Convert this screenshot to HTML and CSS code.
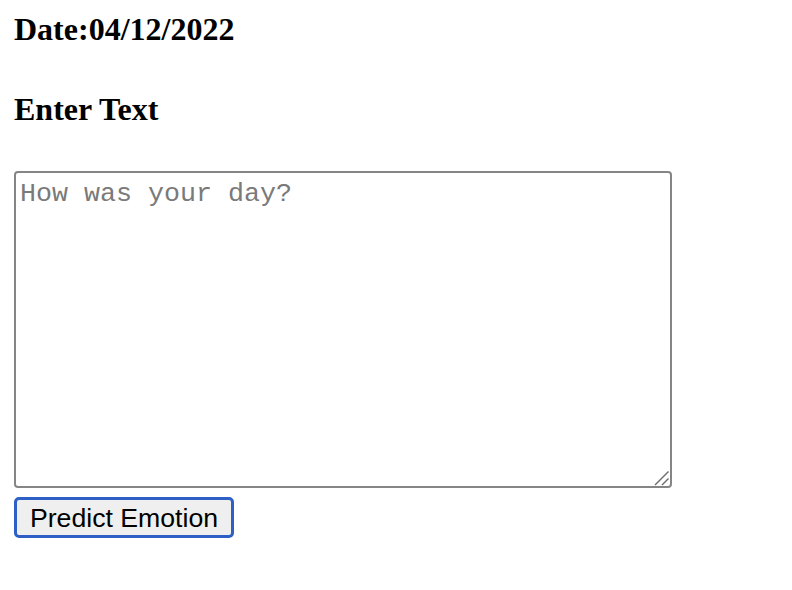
FILE: index.html
```html
<!DOCTYPE html>
<html>
<head>
<meta charset="utf-8">
<link rel="stylesheet" href="styles.css">
</head>
<body>
<div class="page">
  <h3 class="date">Date:04/12/2022</h3>
  <h3 class="label">Enter Text</h3>
  <form class="form">
    <div class="area-wrap">
      <textarea class="entry" placeholder="How was your day?"></textarea>
      <svg class="grip" width="16" height="16" viewBox="0 0 16 16">
        <line x1="1" y1="15" x2="14.5" y2="1.5" stroke="#6e6e6e" stroke-width="1.4"/>
        <line x1="8" y1="15" x2="14.5" y2="8.5" stroke="#6e6e6e" stroke-width="1.4"/>
      </svg>
    </div>
    <button type="button" class="predict">Predict Emotion</button>
  </form>
</div>
</body>
</html>
```
FILE: styles.css
```css
html, body {
  margin: 0;
  padding: 0;
  background: #ffffff;
}
.page {
  padding: 11px 14px 0 14px;
  font-family: "Liberation Serif", "Times New Roman", serif;
  color: #000;
}
.date, .label {
  font-size: 32px;
  font-weight: bold;
  line-height: 37px;
  margin: 0;
}
.label {
  margin-top: 43px;
}
.form {
  margin-top: 43px;
  display: flex;
  flex-direction: column;
  align-items: flex-start;
  gap: 9px;
}
.area-wrap {
  position: relative;
  width: 658px;
  height: 317px;
}
.entry {
  box-sizing: border-box;
  width: 658px;
  height: 317px;
  margin: 0;
  padding: 6px 4px 5px 4px;
  border: 2px solid #858585;
  border-radius: 4px;
  font-family: "Liberation Mono", "Courier New", monospace;
  font-size: 26.67px;
  resize: none;
  outline: none;
  display: block;
}
.entry::placeholder {
  color: #7a7a7a;
}
.grip {
  position: absolute;
  right: 2px;
  bottom: 2px;
  pointer-events: none;
}
.predict {
  box-sizing: border-box;
  width: 220px;
  height: 41px;
  margin: 0;
  padding: 0;
  white-space: nowrap;
  background: #efefef;
  border: 3px solid #2d5fc7;
  border-radius: 5px;
  font-family: "Liberation Sans", Arial, sans-serif;
  font-size: 26.67px;
  color: #000;
  line-height: 30px;
}
```
